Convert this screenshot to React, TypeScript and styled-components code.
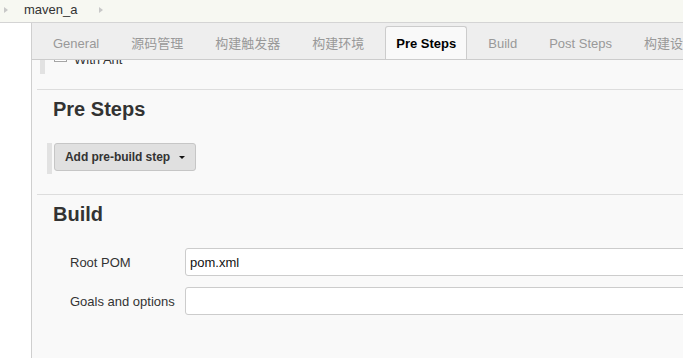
import React from "react";
import styled, { createGlobalStyle } from "styled-components";

const GlobalStyle = createGlobalStyle`
  html, body {
    margin: 0;
    padding: 0;
    overflow: hidden;
  }
  body {
    font-family: "Liberation Sans", Arial, "Noto Sans CJK SC", sans-serif;
    font-size: 13px;
    color: #333;
    background: #fff;
  }
  * { box-sizing: border-box; }
`;

const Page = styled.div`
  height: 100vh;
  display: flex;
  flex-direction: column;
`;

const Breadcrumb = styled.div`
  height: 23px;
  flex-shrink: 0;
  display: flex;
  align-items: center;
  padding: 0 0 3px 4px;
  background: #f7f8f2;
  border-bottom: 1px solid #d4d4d4;
`;

const CrumbArrow = styled.span`
  width: 0;
  height: 0;
  border-left: 4px solid #c8c8c8;
  border-top: 3px solid transparent;
  border-bottom: 3px solid transparent;
`;

const Crumb = styled.a`
  color: #333;
  font-size: 13px;
  line-height: 15px;
  margin: 0 22px 0 16px;
  text-decoration: none;
`;

const Body = styled.div`
  flex: 1;
  display: flex;
  min-height: 0;
`;

const Sidebar = styled.div`
  width: 32px;
  flex-shrink: 0;
  background: #fff;
  border-right: 1px solid #cfcfcf;
`;

const Main = styled.div`
  flex: 1;
  min-width: 0;
  display: flex;
  flex-direction: column;
  overflow: hidden;
`;

const TabBar = styled.div`
  height: 37px;
  flex-shrink: 0;
  display: flex;
  align-items: flex-end;
  padding: 3px 0 0 5px;
  background: #eeeeee;
  border-bottom: 1px solid #cccccc;
  white-space: nowrap;
  overflow: hidden;
  position: relative;
  z-index: 1;
`;

const Tab = styled.div<{ $active?: boolean }>`
  flex-shrink: 0;
  height: 34px;
  margin: 0 5px -1px;
  padding: 0 10px;
  display: flex;
  align-items: center;
  border: 1px solid ${(p) => (p.$active ? "#cccccc" : "transparent")};
  border-bottom: none;
  border-radius: 3px 3px 0 0;
  background: ${(p) => (p.$active ? "#f9f9f9" : "transparent")};
  color: ${(p) => (p.$active ? "#000" : "#999")};
  font-weight: ${(p) => (p.$active ? "bold" : "normal")};
  font-size: 13px;
  line-height: 15px;
`;

const Content = styled.div`
  flex: 1;
  display: flex;
  flex-direction: column;
  background: #f9f9f9;
  overflow: hidden;
`;

const AntRow = styled.div`
  flex-shrink: 0;
  height: 29px;
  margin: -15px 0 0 8px;
  padding-left: 9px;
  display: flex;
  align-items: flex-start;
  border-left: 5px solid #e2e2e2;
`;

const CheckBox = styled.span`
  width: 13px;
  height: 13px;
  margin-top: 4px;
  border: 1px solid #a5a5a5;
  background: #fff;
  flex-shrink: 0;
`;

const CheckLabel = styled.span`
  margin: 7px 0 0 7px;
  font-size: 13px;
  line-height: 15px;
  color: #333;
`;

const Section = styled.section<{ $gap: number }>`
  flex-shrink: 0;
  margin: ${(p) => p.$gap}px 0 0 5px;
  border-top: 1px solid #dddddd;
  display: flex;
  flex-direction: column;
`;

const Heading = styled.h2`
  margin: 0;
  padding: 7px 0 0 16px;
  font-size: 20px;
  line-height: 24px;
  font-weight: bold;
  color: #333;
`;

const StepBar = styled.div`
  margin: 22px 0 0 10px;
  height: 31px;
  padding-left: 2px;
  display: flex;
  align-items: flex-start;
  border-left: 5px solid #e2e2e2;
`;

const DropButton = styled.button`
  height: 28px;
  padding: 0 10px;
  display: inline-flex;
  align-items: center;
  gap: 9px;
  background: #e0e0e0;
  border: 1px solid #c6c6c6;
  border-radius: 3px;
  font-family: "Liberation Sans", Arial, sans-serif;
  font-size: 12px;
  font-weight: bold;
  letter-spacing: -0.05px;
  color: #333;
  cursor: pointer;
`;

const Caret = styled.span`
  width: 0;
  height: 0;
  border-left: 3px solid transparent;
  border-right: 3px solid transparent;
  border-top: 3px solid #111;
  margin-top: 1px;
`;

const Form = styled.div`
  margin-top: 22px;
  display: flex;
  flex-direction: column;
  gap: 11px;
`;

const FormRow = styled.div`
  display: flex;
  align-items: center;
  height: 28px;
`;

const FieldLabel = styled.label`
  width: 148px;
  flex-shrink: 0;
  padding-left: 33px;
  font-size: 13px;
  color: #333;
`;

const TextInput = styled.input`
  flex: 1;
  min-width: 0;
  height: 28px;
  margin-right: -20px;
  padding: 0 4px;
  border: 1px solid #cccccc;
  border-radius: 3px;
  background: #fff;
  font-family: "Liberation Sans", Arial, sans-serif;
  font-size: 13px;
  color: #111;
  outline: none;
`;

const tabs = [
  "General",
  "源码管理",
  "构建触发器",
  "构建环境",
  "Pre Steps",
  "Build",
  "Post Steps",
  "构建设置",
];

export default function App() {
  return (
    <>
      <GlobalStyle />
      <Page>
        <Breadcrumb>
          <CrumbArrow />
          <Crumb href="#">maven_a</Crumb>
          <CrumbArrow />
        </Breadcrumb>
        <Body>
          <Sidebar />
          <Main>
            <TabBar>
              {tabs.map((t) => (
                <Tab key={t} $active={t === "Pre Steps"}>
                  {t}
                </Tab>
              ))}
            </TabBar>
            <Content>
              <AntRow>
                <CheckBox />
                <CheckLabel>With Ant</CheckLabel>
              </AntRow>
              <Section $gap={15}>
                <Heading>Pre Steps</Heading>
                <StepBar>
                  <DropButton>
                    Add pre-build step
                    <Caret />
                  </DropButton>
                </StepBar>
              </Section>
              <Section $gap={20}>
                <Heading>Build</Heading>
                <Form>
                  <FormRow>
                    <FieldLabel>Root POM</FieldLabel>
                    <TextInput defaultValue="pom.xml" />
                  </FormRow>
                  <FormRow>
                    <FieldLabel>Goals and options</FieldLabel>
                    <TextInput defaultValue="" />
                  </FormRow>
                </Form>
              </Section>
            </Content>
          </Main>
        </Body>
      </Page>
    </>
  );
}
